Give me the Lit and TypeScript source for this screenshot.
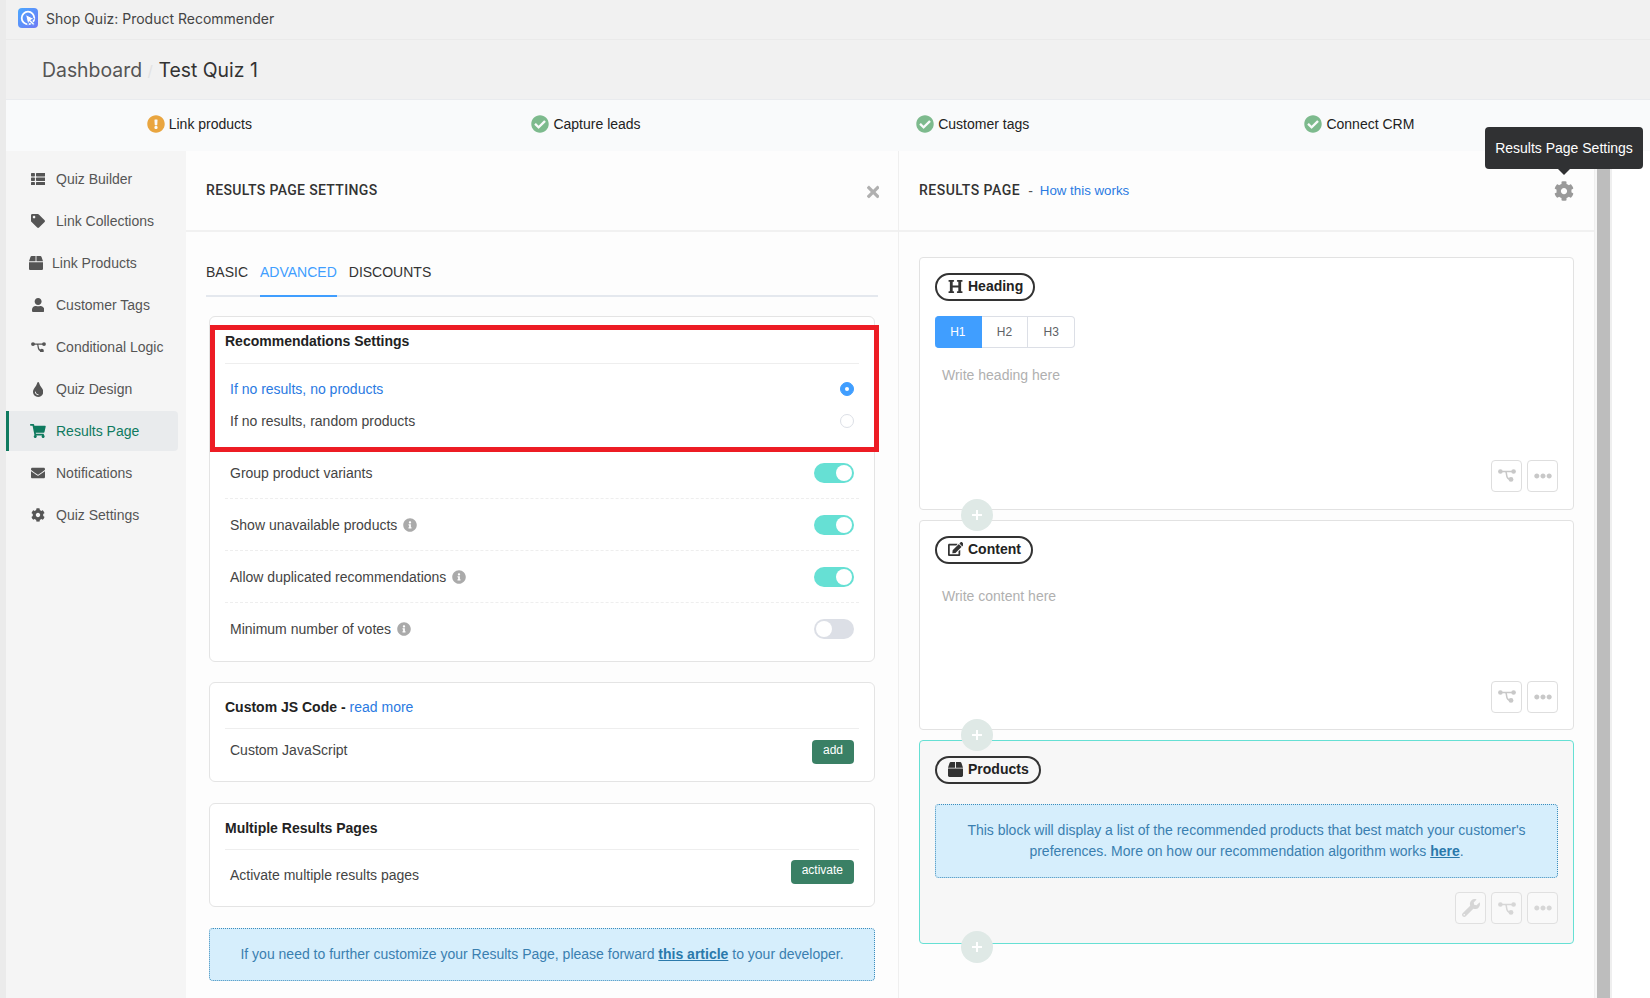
import { LitElement, html, css, svg } from "lit";
import { customElement } from "lit/decorators.js";

const P: Record<string, [number, number, string]> = {
  tag: [512, 512, "M0 252.118V48C0 21.49 21.49 0 48 0h204.118a48 48 0 0 1 33.941 14.059l211.882 211.882c18.745 18.745 18.745 49.137 0 67.882L293.823 497.941c-18.745 18.745-49.137 18.745-67.882 0L14.059 286.059A48 48 0 0 1 0 252.118zM112 64c-26.51 0-48 21.49-48 48s21.49 48 48 48 48-21.49 48-48-21.49-48-48-48z"],
  box: [512, 512, "M509.5 184.6L458.9 32.8C452.4 13.2 434.1 0 413.4 0H272v192h238.7c-.4-2.5-.4-5-1.2-7.4zM240 0H98.6c-20.7 0-39 13.2-45.5 32.8L2.5 184.6c-.8 2.4-.8 4.9-1.2 7.4H240V0zM0 224v240c0 26.5 21.5 48 48 48h416c26.5 0 48-21.5 48-48V224H0z"],
  user: [448, 512, "M224 256c70.7 0 128-57.3 128-128S294.7 0 224 0 96 57.3 96 128s57.3 128 128 128zm89.6 32h-16.7c-22.2 10.2-46.9 16-72.9 16s-50.6-5.8-72.9-16h-16.7C60.2 288 0 348.2 0 422.4V464c0 26.5 21.5 48 48 48h352c26.5 0 48-21.5 48-48v-41.6c0-74.2-60.2-134.4-134.4-134.4z"],
  tint: [352, 512, "M205.22 22.09c-7.94-28.78-49.44-30.12-58.44 0C100.01 179.85 0 222.72 0 333.91 0 432.35 78.72 512 176 512s176-79.65 176-178.09c0-111.75-99.79-153.34-146.78-311.82zM176 448c-61.75 0-112-50.25-112-112 0-8.84 7.16-16 16-16s16 7.16 16 16c0 44.11 35.89 80 80 80 8.84 0 16 7.16 16 16s-7.16 16-16 16z"],
  cart: [576, 512, "M528.12 301.319l47.273-208C578.806 78.301 567.391 64 551.99 64H159.208l-9.166-44.81C147.758 8.021 137.93 0 126.529 0H24C10.745 0 0 10.745 0 24v16c0 13.255 10.745 24 24 24h69.883l70.248 343.435C147.325 417.1 136 435.222 136 456c0 30.928 25.072 56 56 56s56-25.072 56-56c0-15.674-6.447-29.835-16.824-40h209.647C430.447 426.165 424 440.326 424 456c0 30.928 25.072 56 56 56s56-25.072 56-56c0-22.172-12.888-41.332-31.579-50.405l5.517-24.276c3.413-15.018-8.002-29.319-23.403-29.319H218.117l-6.545-32h293.145c11.206 0 20.92-7.754 23.403-18.681z"],
  mail: [512, 512, "M502.3 190.8c3.9-3.1 9.7-.2 9.7 4.7V400c0 26.5-21.5 48-48 48H48c-26.5 0-48-21.5-48-48V195.6c0-5 5.7-7.8 9.7-4.7 22.4 17.4 52.1 39.5 154.1 113.6 21.1 15.4 56.7 47.8 92.2 47.6 35.7.3 72-32.8 92.3-47.6 102-74.1 131.6-96.3 154-113.7zM256 320c23.2.4 56.6-29.2 73.4-41.4 132.7-96.3 142.8-104.7 173.4-128.7 5.8-4.5 9.2-11.5 9.2-18.9v-19c0-26.5-21.5-48-48-48H48C21.5 64 0 85.5 0 112v19c0 7.4 3.4 14.3 9.2 18.9 30.6 23.9 40.7 32.4 173.4 128.7 16.8 12.2 50.2 41.8 73.4 41.4z"],
  cog: [512, 512, "M487.4 315.7l-42.6-24.6c4.3-23.2 4.3-47 0-70.2l42.6-24.6c4.9-2.8 7.1-8.6 5.5-14-11.1-35.6-30-67.8-54.7-94.6-3.8-4.1-10-5.1-14.8-2.3L380.8 110c-17.9-15.4-38.5-27.3-60.8-35.1V25.8c0-5.6-3.9-10.5-9.4-11.7-36.7-8.2-74.3-7.8-109.2 0-5.5 1.2-9.4 6.1-9.4 11.7V75c-22.2 7.9-42.8 19.8-60.8 35.1L88.7 85.5c-4.9-2.8-11-1.9-14.8 2.3-24.7 26.7-43.6 58.9-54.7 94.6-1.7 5.4.6 11.2 5.5 14L67.3 221c-4.3 23.2-4.3 47 0 70.2l-42.6 24.6c-4.9 2.8-7.1 8.6-5.5 14 11.1 35.6 30 67.8 54.7 94.6 3.8 4.1 10 5.1 14.8 2.3l42.6-24.6c17.9 15.4 38.5 27.3 60.8 35.1v49.2c0 5.6 3.9 10.5 9.4 11.7 36.7 8.2 74.3 7.8 109.2 0 5.5-1.2 9.4-6.1 9.4-11.7v-49.2c22.2-7.9 42.8-19.8 60.8-35.1l42.6 24.6c4.9 2.8 11 1.9 14.8-2.3 24.7-26.7 43.6-58.9 54.7-94.6 1.5-5.5-.7-11.3-5.6-14.1zM256 336c-44.1 0-80-35.9-80-80s35.9-80 80-80 80 35.9 80 80-35.9 80-80 80z"],
  check: [512, 512, "M504 256c0 136.967-111.033 248-248 248S8 392.967 8 256 119.033 8 256 8s248 111.033 248 248zM227.314 387.314l184-184c6.248-6.248 6.248-16.379 0-22.627l-22.627-22.627c-6.248-6.249-16.379-6.249-22.628 0L216 308.118l-70.059-70.059c-6.248-6.248-16.379-6.248-22.628 0l-22.627 22.627c-6.248 6.248-6.248 16.379 0 22.627l104 104c6.249 6.249 16.379 6.249 22.628.001z"],
  warn: [512, 512, "M504 256c0 136.997-111.043 248-248 248S8 392.997 8 256C8 119.083 119.043 8 256 8s248 111.083 248 248zm-248 50c-25.405 0-46 20.595-46 46s20.595 46 46 46 46-20.595 46-46-20.595-46-46-46zm-43.673-165.346l7.418 136c.347 6.364 5.609 11.346 11.982 11.346h48.546c6.373 0 11.635-4.982 11.982-11.346l7.418-136c.375-6.874-5.098-12.654-11.982-12.654h-63.383c-6.884 0-12.356 5.78-11.981 12.654z"],
  info: [512, 512, "M256 8C119.043 8 8 119.083 8 256c0 136.997 111.043 248 248 248s248-111.003 248-248C504 119.083 392.957 8 256 8zm0 110c23.196 0 42 18.804 42 42s-18.804 42-42 42-42-18.804-42-42 18.804-42 42-42zm56 254c0 6.627-5.373 12-12 12h-88c-6.627 0-12-5.373-12-12v-24c0-6.627 5.373-12 12-12h12v-64h-12c-6.627 0-12-5.373-12-12v-24c0-6.627 5.373-12 12-12h64c6.627 0 12 5.373 12 12v100h12c6.627 0 12 5.373 12 12v24z"],
  times: [352, 512, "M242.72 256l100.07-100.07c12.28-12.28 12.28-32.19 0-44.48l-22.24-22.24c-12.28-12.28-32.19-12.28-44.48 0L176 189.28 75.93 89.21c-12.28-12.28-32.19-12.28-44.48 0L9.21 111.45c-12.28 12.28-12.28 32.19 0 44.48L109.28 256 9.21 356.07c-12.28 12.28-12.28 32.19 0 44.48l22.24 22.24c12.28 12.28 32.2 12.28 44.48 0L176 322.72l100.07 100.07c12.28 12.28 32.2 12.28 44.48 0l22.24-22.24c12.28-12.28 12.28-32.19 0-44.48L242.72 256z"],
  dots: [512, 512, "M328 256c0 39.8-32.2 72-72 72s-72-32.2-72-72 32.2-72 72-72 72 32.2 72 72zm104-72c-39.8 0-72 32.2-72 72s32.2 72 72 72 72-32.2 72-72-32.2-72-72-72zm-352 0c-39.8 0-72 32.2-72 72s32.2 72 72 72 72-32.2 72-72-32.2-72-72-72z"],
  wrench: [512, 512, "M507.73 109.1c-2.24-9.03-13.54-12.09-20.12-5.51l-74.36 74.36-67.88-11.31-11.31-67.88 74.36-74.36c6.62-6.62 3.43-17.9-5.66-20.16-47.38-11.74-99.55.91-136.58 37.93-39.64 39.64-50.55 97.1-34.05 147.2L18.74 402.76c-24.99 24.99-24.99 65.51 0 90.5 24.99 24.99 65.51 24.99 90.5 0l213.21-213.21c50.12 16.71 107.47 5.68 147.37-34.22 37.07-37.07 49.7-89.32 37.91-136.73zM64 472c-13.25 0-24-10.75-24-24 0-13.26 10.75-24 24-24s24 10.74 24 24c0 13.25-10.75 24-24 24z"],
  edit: [576, 512, "M402.6 83.2l90.2 90.2c3.8 3.8 3.8 10 0 13.8L274.4 405.6l-92.8 10.3c-12.4 1.4-22.9-9.1-21.5-21.5l10.3-92.8L388.8 83.2c3.8-3.8 10-3.8 13.8 0zm162-22.9l-48.8-48.8c-15.2-15.2-39.9-15.2-55.2 0l-35.4 35.4c-3.8 3.8-3.8 10 0 13.8l90.2 90.2c3.8 3.8 10 3.8 13.8 0l35.4-35.4c15.2-15.3 15.2-40 0-55.2zM384 346.2V448H64V128h229.8c3.2 0 6.2-1.3 8.5-3.5l40-40c7.6-7.6 2.2-20.5-8.5-20.5H48C21.5 64 0 85.5 0 112v352c0 26.5 21.5 48 48 48h352c26.5 0 48-21.5 48-48V306.2c0-10.7-12.9-16-20.5-8.5l-40 40c-2.2 2.3-3.5 5.3-3.5 8.5z"],
  heading: [512, 512, "M448 96v320h32a16 16 0 0 1 16 16v32a16 16 0 0 1-16 16H320a16 16 0 0 1-16-16v-32a16 16 0 0 1 16-16h32V288H160v128h32a16 16 0 0 1 16 16v32a16 16 0 0 1-16 16H32a16 16 0 0 1-16-16v-32a16 16 0 0 1 16-16h32V96H32a16 16 0 0 1-16-16V48a16 16 0 0 1 16-16h160a16 16 0 0 1 16 16v32a16 16 0 0 1-16 16h-32v128h192V96h-32a16 16 0 0 1-16-16V48a16 16 0 0 1 16-16h160a16 16 0 0 1 16 16v32a16 16 0 0 1-16 16z"],
};

const ic = (n: string, h: number) => {
  const [w, vh, d] = P[n];
  return svg`<svg class="ic" viewBox="0 0 ${w} ${vh}" height=${h} width=${(h * w) / vh} fill="currentColor"><path d=${d}></path></svg>`;
};

const list = (h: number) => svg`<svg class="ic" viewBox="0 0 16 14" width=${(h * 16) / 14} height=${h} fill="currentColor">
  <rect x="0" y="0" width="4.4" height="3.8" rx=".7"/><rect x="5.6" y="0" width="10.4" height="3.8" rx=".7"/>
  <rect x="0" y="5.1" width="4.4" height="3.8" rx=".7"/><rect x="5.6" y="5.1" width="10.4" height="3.8" rx=".7"/>
  <rect x="0" y="10.2" width="4.4" height="3.8" rx=".7"/><rect x="5.6" y="10.2" width="10.4" height="3.8" rx=".7"/></svg>`;

const branch = (w: number) => svg`<svg class="ic" viewBox="0 0 18 13" width=${w} height=${(w * 13) / 18} fill="none" stroke="currentColor" stroke-width="1.5">
  <path d="M2.3 2.5h13M7.2 2.5c.9 0 1.2 1 1.4 3.4.3 3.4 1.2 4.4 3.9 4.5"/>
  <circle cx="2.4" cy="2.5" r="2.3" fill="currentColor" stroke="none"/><circle cx="15.6" cy="2.5" r="2.3" fill="currentColor" stroke="none"/>
  <circle cx="13" cy="10.4" r="2.4" fill="currentColor" stroke="none"/></svg>`;

const NAV: [string, any, boolean?][] = [
  ["Quiz Builder", list(12.5)],
  ["Link Collections", ic("tag", 14)],
  ["Link Products", ic("box", 14)],
  ["Customer Tags", ic("user", 14)],
  ["Conditional Logic", branch(15)],
  ["Quiz Design", ic("tint", 15)],
  ["Results Page", ic("cart", 14), true],
  ["Notifications", ic("mail", 14)],
  ["Quiz Settings", ic("cog", 14)],
];

@customElement("app-root")
export class AppRoot extends LitElement {
  static styles = css`
    :host {
      display: block; width: 1650px; height: 998px; overflow: hidden; box-sizing: border-box;
      padding-left: 6px; background: #ebebeb; position: relative;
      font-family: "Liberation Sans", Arial, sans-serif; font-size: 14px; color: #333;
    }
    * { box-sizing: border-box; }
    .ic { display: block; flex: none; }
    a { color: inherit; text-decoration: none; }
    .appbar { height: 40px; background: #f1f1f1; border-bottom: 1px solid #eaeaea; display: flex; align-items: center; gap: 8px; padding: 0 0 3px 12px; font-family: Inter, sans-serif; font-size: 14px; color: #444; }
    .logo { width: 20px; height: 20px; flex: none; display: block; }
    .crumbs { height: 60px; background: #f1f1f1; display: flex; align-items: center; padding: 1px 0 0 36px; font-family: Inter, sans-serif; font-size: 19.4px; color: #555; border-bottom: 1px solid #e9ebee; }
    .crumbs i { font-style: normal; color: #e2e2e2; padding: 0 5.5px; font-size: 15px; }
    .crumbs b { font-weight: 400; color: #333; }
    .steps { height: 51px; background: #f9fafb; display: grid; grid-template-columns: repeat(4, 386.7px); padding-bottom: 3px; }
    .step { display: flex; align-items: center; justify-content: center; gap: 4px; color: #222; }
    .step .warn { color: #e9a53f; }
    .step .ok { color: #7dba8d; }
    .main { display: flex; height: 847px; background: #fff; }
    .side { width: 180px; flex: none; background: #f5f5f5; padding-top: 8px; display: flex; flex-direction: column; gap: 2px; }
    .nav { height: 40px; width: 172px; display: flex; align-items: center; gap: 10px; padding-left: 21px; color: #555; border-left: 3px solid transparent; border-radius: 0 4px 4px 0; }
    .ni { width: 16px; flex: none; display: flex; justify-content: center; color: #555; }
    .nav.tight { padding-left: 20px; gap: 9px; }
    .nav.tight .ni { width: 14px; }
    .nav.on { background: #e9ebed; color: #0f7a5f; border-left-color: #0f7a5f; }
    .nav.on .ni { color: #0f7a5f; }
    .panel { flex: none; background: #fdfdfd; }
    .left { width: 713px; border-right: 1px solid #efefef; }
    .right { width: 696px; border-right: 1px solid #efefef; }
    .gutter { width: 2px; background: #f6f6f6; flex: none; }
    .thumb { width: 13px; background: #bdbdbd; flex: none; }
    .gutter2 { width: 2px; background: #efefef; flex: none; }
    .phead { height: 81px; border-bottom: 2px solid #f1f1f1; display: flex; align-items: center; justify-content: space-between; padding: 0 19px 0 20px; }
    .ptitle { font-family: Roboto, sans-serif; font-weight: 500; font-size: 14px; letter-spacing: .35px; color: #333; position: relative; top: -1px; }
    .phead.r { padding: 0 20px 0 20px; }
    .phead.r .ptitle { letter-spacing: .5px; }
    .x { color: #b0b0b0; margin-top: 2px; }
    .lbody { padding: 0 20px; }
    .tabs { display: flex; height: 65px; align-items: flex-end; gap: 12px; border-bottom: 2px solid #e4e8ee; }
    .tab { height: 33px; color: #333; margin-bottom: -2px; border-bottom: 2px solid transparent; }
    .tab.on { color: #409eff; border-bottom-color: #409eff; }
    .card { width: 666px; margin-left: 3px; background: #fff; border: 1.5px solid #e4e4e4; border-radius: 6px; padding: 0 15px; }
    .c1 { margin-top: 18.5px; height: 346px; position: relative; }
    .c2 { margin-top: 20px; height: 100px; }
    .c3 { margin-top: 21px; height: 104px; }
    .chead { height: 46px; padding-top: 3px; border-bottom: 1px solid #eee; font-weight: 700; display: flex; align-items: center; color: #222; }
    .c1 .chead { height: 47px; }
    .opts { padding-top: 9.5px; }
    .opt { height: 32px; display: flex; align-items: center; justify-content: space-between; padding: 0 5px; color: #444; }
    .opt.on { color: #2a7ae2; }
    .radio { width: 14px; height: 14px; border-radius: 50%; border: 1px solid #dcdfe6; background: #fff; display: flex; align-items: center; justify-content: center; }
    .radio.on { background: #409eff; border-color: #409eff; }
    .radio.on::after { content: ""; width: 4px; height: 4px; background: #fff; border-radius: 50%; }
    .rows { margin-top: 10px; }
    .row { height: 52px; display: flex; align-items: center; justify-content: space-between; padding: 0 5px; border-bottom: 1px dashed #eee; color: #444; }
    .row:last-child { border-bottom: 0; }
    .lab { display: flex; align-items: center; gap: 6px; }
    .lab svg { color: #aaa; }
    .sw { width: 40px; height: 20px; border-radius: 10px; background: #66e0d4; display: flex; align-items: center; justify-content: flex-end; padding: 0 2px; }
    .sw::after { content: ""; width: 16px; height: 16px; border-radius: 50%; background: #fff; }
    .sw.off { background: #dcdfe6; justify-content: flex-start; }
    .bar { display: flex; justify-content: space-between; align-items: center; padding: 0 5px; color: #444; }
    .c2 .bar { height: 47px; }
    .c2 .bar > span:first-child { margin-bottom: 4px; }
    .c3 .bar { height: 45px; }
    .c3 .bar > span:first-child { margin-top: 6px; }
    .tbtn { height: 24px; padding: 0 11px 4px; background: #3a8065; color: #fff; border-radius: 4px; font-size: 12px; display: flex; align-items: center; }
    .link { color: #2a7ae2; font-weight: 400; margin-left: 4px; }
    .dash { color: #555; margin: 0 7px 0 8px; }
    .hw { font-size: 13.3px; margin-left: 0; }
    .alert { background: #d6eefc; border: 1px dotted #3c8dbc; border-radius: 4px; color: #3a7fb0; text-align: center; line-height: 21px; display: flex; align-items: center; justify-content: center; }
    .alert a { font-weight: 700; text-decoration: underline; color: #2a79ab; }
    .ali { width: 666px; margin: 21px 0 0 3px; height: 53px; }
    .rbody { padding: 25px 20px 0 20px; display: flex; flex-direction: column; gap: 10px; }
    .block { position: relative; background: #fff; border: 1.5px solid #e2e2e2; border-radius: 4px; padding: 14.5px 15px 0; display: flex; flex-direction: column; }
    .b1 { height: 253px; }
    .b2 { height: 210px; }
    .b3 { height: 204px; background: #f7f7f7; border: 1px solid #66e0d4; }
    .pill { align-self: flex-start; height: 28px; border: 2px solid #333; border-radius: 14px; padding: 0 10px 1px 11px; display: flex; align-items: center; gap: 5px; font-weight: 700; color: #222; }
    .pi { width: 15px; flex: none; display: flex; justify-content: center; color: #333; }
    .btns { display: flex; margin-top: 15.5px; height: 32px; width: 140px; font-size: 12px; color: #606266; }
    .btns div { flex: 1; display: flex; align-items: center; justify-content: center; border: 1px solid #dcdfe6; border-left: 0; }
    .btns div:first-child { background: #409eff; color: #fff; border-color: #409eff; border-radius: 4px 0 0 4px; }
    .btns div:last-child { border-radius: 0 4px 4px 0; }
    .ph { color: #b0b0b0; padding-left: 7px; }
    .b1 .ph { margin-top: 19px; }
    .b2 .ph { margin-top: 24px; }
    .tools { position: absolute; right: 15px; bottom: 16.5px; display: flex; gap: 5px; }
    .b1 .tools { bottom: 17.5px; }
    .b3 .tools { bottom: 19px; }
    .tool { width: 31px; height: 32px; border: 1px solid #dedede; border-radius: 4px; background: #fff; color: #c8c8c8; display: flex; align-items: center; justify-content: center; }
    .b3 .tool { background: #f9f9f9; border-color: #e0e0e0; color: #d6d6d6; }
    .plus { position: absolute; left: 40.5px; bottom: -21.5px; width: 32px; height: 32px; border-radius: 50%; background: #dfe9e6; color: #fff; display: flex; align-items: center; justify-content: center; z-index: 2; }
    .b3 .plus { bottom: -20px; }
    .bali { height: 74px; margin-top: 20px; padding: 0 25px; }
    .red { position: absolute; left: -.5px; top: 8px; width: 669px; height: 127px; border: 5px solid #ed1c24; z-index: 5; pointer-events: none; }
    .tip { position: absolute; left: 1485px; top: 127px; width: 158px; height: 42px; background: #303133; color: #fff; border-radius: 4px; display: flex; align-items: center; justify-content: center; z-index: 10; }
    .tip::after { content: ""; position: absolute; left: 73px; bottom: -6px; border: 6px solid transparent; border-top-color: #303133; border-bottom: 0; }
    .gear { color: #999; }
    .rt { display: flex; align-items: center; }
  `;

  private plus() {
    return html`<div class="plus"><svg width="12" height="12" viewBox="0 0 12 12"><path d="M6 1v10M1 6h10" stroke="currentColor" stroke-width="2"/></svg></div>`;
  }
  private tools(w = false) {
    return html`<div class="tools">
      ${w ? html`<div class="tool">${ic("wrench", 18)}</div>` : ""}
      <div class="tool">${branch(18)}</div>
      <div class="tool">${ic("dots", 18)}</div>
    </div>`;
  }
  private row(t: string, info: boolean, on: boolean) {
    return html`<div class="row"><span class="lab">${t}${info ? ic("info", 14) : ""}</span><span class="sw ${on ? "" : "off"}"></span></div>`;
  }

  render() {
    return html`
      <div class="appbar">
        <svg class="logo" viewBox="0 0 20 20">
          <defs><linearGradient id="g" x1="0" y1="0" x2="1" y2="1"><stop offset="0" stop-color="#4aa8ff"/><stop offset="1" stop-color="#6f78f5"/></linearGradient></defs>
          <rect width="20" height="20" rx="4" fill="url(#g)"/>
          <circle cx="10" cy="10" r="6.3" fill="none" stroke="#fff" stroke-width="1.8"/>
          <path d="M7.6 6.6l8.6 4.2-3.4 1.3 3.8 3.8-1.5 1.5-3.8-3.8-1.3 3.4z" fill="#fff" stroke="#5d8df5" stroke-width=".9"/>
        </svg>
        <span>Shop Quiz: Product Recommender</span>
      </div>
      <div class="crumbs"><span>Dashboard</span><i>/</i><b>Test Quiz 1</b></div>
      <div class="steps">
        <div class="step"><span class="warn">${ic("warn", 18)}</span>Link products</div>
        <div class="step"><span class="ok">${ic("check", 18)}</span>Capture leads</div>
        <div class="step"><span class="ok">${ic("check", 18)}</span>Customer tags</div>
        <div class="step"><span class="ok">${ic("check", 18)}</span>Connect CRM</div>
      </div>
      <div class="main">
        <nav class="side">
          ${NAV.map(([t, i, on]) => html`<div class="nav ${on ? "on" : ""} ${t === "Link Products" ? "tight" : ""}"><span class="ni">${i}</span><span>${t}</span></div>`)}
        </nav>
        <section class="panel left">
          <div class="phead"><span class="ptitle">RESULTS PAGE SETTINGS</span><span class="x">${ic("times", 18)}</span></div>
          <div class="lbody">
            <div class="tabs">
              <div class="tab">BASIC</div><div class="tab on">ADVANCED</div><div class="tab">DISCOUNTS</div>
            </div>
            <div class="card c1">
              <div class="red"></div>
              <div class="chead">Recommendations Settings</div>
              <div class="opts">
                <div class="opt on"><span>If no results, no products</span><span class="radio on"></span></div>
                <div class="opt"><span>If no results, random products</span><span class="radio"></span></div>
              </div>
              <div class="rows">
                ${this.row("Group product variants", false, true)}
                ${this.row("Show unavailable products", true, true)}
                ${this.row("Allow duplicated recommendations", true, true)}
                ${this.row("Minimum number of votes", true, false)}
              </div>
            </div>
            <div class="card c2">
              <div class="chead">Custom JS Code -<a class="link">read more</a></div>
              <div class="bar"><span>Custom JavaScript</span><span class="tbtn">add</span></div>
            </div>
            <div class="card c3">
              <div class="chead">Multiple Results Pages</div>
              <div class="bar"><span>Activate multiple results pages</span><span class="tbtn">activate</span></div>
            </div>
            <div class="alert ali"><span>If you need to further customize your Results Page, please forward <a>this article</a> to your developer.</span></div>
          </div>
        </section>
        <section class="panel right">
          <div class="phead r">
            <span class="rt"><span class="ptitle">RESULTS PAGE</span><span class="dash">-</span><a class="link hw">How this works</a></span>
            <span class="gear">${ic("cog", 20)}</span>
          </div>
          <div class="rbody">
            <div class="block b1">
              <div class="pill"><span class="pi">${ic("heading", 15)}</span>Heading</div>
              <div class="btns"><div>H1</div><div>H2</div><div>H3</div></div>
              <div class="ph">Write heading here</div>
              ${this.tools()}${this.plus()}
            </div>
            <div class="block b2">
              <div class="pill"><span class="pi">${ic("edit", 14)}</span>Content</div>
              <div class="ph">Write content here</div>
              ${this.tools()}${this.plus()}
            </div>
            <div class="block b3">
              <div class="pill"><span class="pi">${ic("box", 15)}</span>Products</div>
              <div class="alert bali"><span>This block will display a list of the recommended products that best match your customer's preferences. More on how our recommendation algorithm works <a>here</a>.</span></div>
              ${this.tools(true)}${this.plus()}
            </div>
          </div>
        </section>
        <div class="gutter"></div><div class="thumb"></div><div class="gutter2"></div>
      </div>
      <div class="tip">Results Page Settings</div>
    `;
  }
}
